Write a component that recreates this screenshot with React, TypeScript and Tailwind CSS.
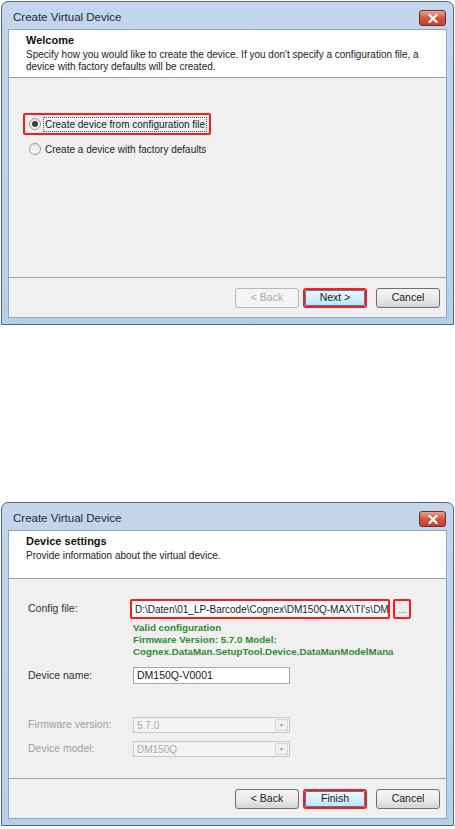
import React from "react";

const font = { fontFamily: '"Liberation Sans", Arial, sans-serif' };

function CloseButton() {
    return (
        <div className="w-[27px] h-[16px] rounded-[3px] border border-[#7a2a20] bg-gradient-to-b from-[#e8a393] via-[#d0553f] to-[#c2422d] flex items-center justify-center">
            <svg width="10" height="9" viewBox="0 0 10 9">
                <path d="M1.5 1 L8.5 8 M8.5 1 L1.5 8" stroke="#ffffff" strokeWidth="2.2" strokeLinecap="square" />
            </svg>
        </div>
    );
}

function Button({ label, kind }: { label: string; kind?: "disabled" | "default" }) {
    if (kind === "default") {
        return (
            <div className="w-[64px] h-[20px] rounded-[3px] border-2 border-[#ff1a1a] p-[0px]">
                <div className="h-full rounded-[2px] border border-[#3c7fb1] bg-gradient-to-b from-[#eaf6fd] to-[#bee6fd] flex items-center justify-center text-[10.5px] text-[#1a1a1a]">
                    {label}
                </div>
            </div>
        );
    }
    return (
        <div
            className={
                kind === "disabled"
                    ? "w-[64px] h-[20px] rounded-[3px] border border-[#b5b9bd] bg-[#f4f4f4] flex items-center justify-center text-[10.5px] text-[#a8a8a8]"
                    : "w-[64px] h-[20px] rounded-[3px] border border-[#707070] bg-gradient-to-b from-[#f3f3f3] via-[#ebebeb] to-[#d5d5d5] flex items-center justify-center text-[10.5px] text-[#1a1a1a]"
            }
        >
            {label}
        </div>
    );
}

function Dialog({
    title,
    subtitle,
    children,
    back,
    next,
}: {
    title: string;
    subtitle: React.ReactNode;
    children: React.ReactNode;
    back: "disabled" | undefined;
    next: string;
}) {
    return (
        <div className="mx-[1px] h-[324px] flex flex-col rounded-t-[7px] border border-[#56687c] bg-gradient-to-b from-[#c3d6ec] via-[#bcd3ea] to-[#b6cfe8] px-[6px] pb-[6px]">
            {/* title bar */}
            <div className="h-[27px] flex items-center justify-between pl-[5px] pr-[1px] pt-[5px]">
                <span className="text-[11.5px] text-[#1b2a3c]">Create Virtual Device</span>
                <CloseButton />
            </div>

            <div className="flex-1 flex flex-col border border-[#8ea6c2] bg-[#f0f0f0]">
                {/* header */}
                <div className="h-[48px] bg-white border-b border-[#a0a0a0] pl-[17px] pt-[3px]">
                    <div className="text-[11px] font-bold text-[#111] leading-[14px]">{title}</div>
                    <div className="text-[10px] text-[#222] leading-[12px] mt-[2px]">{subtitle}</div>
                </div>

                {/* body */}
                <div className="flex-1">{children}</div>

                {/* footer */}
                <div className="h-[40px] border-t border-[#a0a0a0] flex items-start justify-end gap-[4px] pt-[10px] pr-[6px]">
                    <Button label="< Back" kind={back} />
                    <Button label={next} kind="default" />
                    <div className="ml-[5px]">
                        <Button label="Cancel" />
                    </div>
                </div>
            </div>
        </div>
    );
}

function Radio({ checked, label, highlight }: { checked?: boolean; label: string; highlight?: boolean }) {
    return (
        <div
            className={
                highlight
                    ? "inline-flex items-center gap-[2px] border-2 border-[#ff1a1a] rounded-[2px] pl-[4px] pr-[2px] h-[22px]"
                    : "inline-flex items-center gap-[2px] pl-[6px] pr-[4px] h-[22px]"
            }
        >
            <div className="w-[12px] h-[12px] rounded-full border border-[#9a9a9a] bg-gradient-to-b from-[#e6e6e6] to-[#fafafa] flex items-center justify-center">
                {checked && <div className="w-[6px] h-[6px] rounded-full bg-[#3d3d3d]" />}
            </div>
            <span
                className={
                    highlight
                        ? "text-[10px] text-[#222] border border-dotted border-[#555] px-[1px] leading-[13px]"
                        : "text-[10px] text-[#222] px-[2px] leading-[13px]"
                }
            >
                {label}
            </span>
        </div>
    );
}

function Field({ label, children, disabled }: { label: string; children: React.ReactNode; disabled?: boolean }) {
    return (
        <div className="flex items-center">
            <div className={disabled ? "w-[105px] text-[10.5px] text-[#a0a0a0]" : "w-[105px] text-[10.5px] text-[#333]"}>
                {label}
            </div>
            {children}
        </div>
    );
}

function Combo({ value }: { value: string }) {
    return (
        <div className="w-[157px] h-[16px] border border-[#c8c8c8] bg-[#f4f4f4] flex items-center justify-between pl-[3px] pr-[1px]">
            <span className="text-[10px] text-[#a8a8a8]">{value}</span>
            <div className="w-[13px] h-[12px] border border-[#d5d5d5] bg-[#f0f0f0] flex items-center justify-center">
                <svg width="5" height="3" viewBox="0 0 5 3">
                    <path d="M0 0 L5 0 L2.5 3 Z" fill="#b0b0b0" />
                </svg>
            </div>
        </div>
    );
}

export default function App() {
    return (
        <div className="w-[455px] h-[829px] bg-white pt-[1px]" style={font}>
            <Dialog
                title="Welcome"
                subtitle={
                    <>
                        Specify how you would like to create the device. If you don't specify a configuration file, a
                        <br />
                        device with factory defaults will be created.
                    </>
                }
                back="disabled"
                next="Next >"
            >
                <div className="flex flex-col items-start pl-[14px] pt-[35px] gap-[3px]">
                    <Radio checked highlight label="Create device from configuration file" />
                    <Radio label="Create a device with factory defaults" />
                </div>
            </Dialog>

            <div className="h-[177px]" />

            <Dialog
                title="Device settings"
                subtitle="Provide information about the virtual device."
                back={undefined}
                next="Finish"
            >
                <div className="flex flex-col pl-[19px] pt-[20px]">
                    <Field label="Config file:">
                        <div className="flex items-center gap-[3px] -ml-[3px]">
                            <div className="w-[260px] h-[20px] border-2 border-[#ff1a1a] rounded-[2px] bg-white flex items-center pl-[3px] overflow-hidden whitespace-nowrap">
                                <span className="text-[10px] text-[#1a1a1a]">D:\Daten\01_LP-Barcode\Cognex\DM150Q-MAX\TI's\DM</span>
                            </div>
                            <div className="w-[18px] h-[20px] border-2 border-[#ff1a1a] rounded-[2px] bg-[#ececec] flex items-end justify-center pb-[2px]">
                                <span className="text-[9px] leading-[9px] text-[#555]">...</span>
                            </div>
                        </div>
                    </Field>
                    <div className="pl-[105px] mt-[3px] text-[9.8px] font-bold leading-[12px] text-[#2e8b2e]">
                        <div>Valid configuration</div>
                        <div>Firmware Version: 5.7.0 Model:</div>
                        <div>Cognex.DataMan.SetupTool.Device.DataManModelMana</div>
                    </div>
                    <div className="mt-[9px]">
                        <Field label="Device name:">
                            <div className="w-[157px] h-[17px] border border-[#a8a8a8] bg-white flex items-center pl-[3px]">
                                <span className="text-[10.5px] text-[#1a1a1a]">DM150Q-V0001</span>
                            </div>
                        </Field>
                    </div>
                    <div className="mt-[33px] flex flex-col gap-[8px]">
                        <Field label="Firmware version:" disabled>
                            <Combo value="5.7.0" />
                        </Field>
                        <Field label="Device model:" disabled>
                            <Combo value="DM150Q" />
                        </Field>
                    </div>
                </div>
            </Dialog>
        </div>
    );
}
